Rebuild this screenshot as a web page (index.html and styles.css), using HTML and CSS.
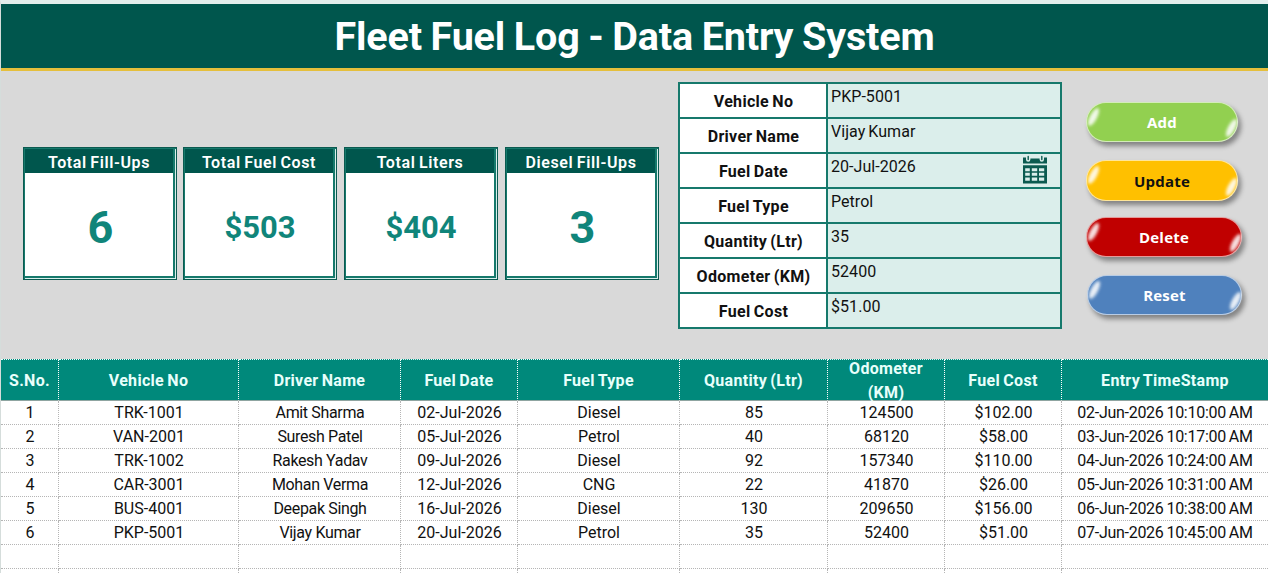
FILE: index.html
```
<!DOCTYPE html>
<html lang="en">
<head>
  <meta charset="UTF-8" />
  <meta name="viewport" content="width=device-width, initial-scale=1.0"/>
  <title>Fleet Fuel Log</title>
  <link rel="stylesheet" href="styles.css">
</head>
<body>
  <!-- Header -->
  <header>
    <h1>Fleet Fuel Log - Data Entry System</h1>
  </header>

  <!-- Summary cards, entry form and buttons -->
  <main class="panel">
    <section class="cards">
      <div class="card">
        <h2>Total Fill-Ups</h2>
        <div class="card-value big">6</div>
      </div>
      <div class="card">
        <h2>Total Fuel Cost</h2>
        <div class="card-value">$503</div>
      </div>
      <div class="card">
        <h2>Total Liters</h2>
        <div class="card-value">$404</div>
      </div>
      <div class="card">
        <h2>Diesel Fill-Ups</h2>
        <div class="card-value big">3</div>
      </div>
    </section>

    <section class="form">
      <div class="label">Vehicle No</div>
      <div class="field">PKP-5001</div>
      <div class="label">Driver Name</div>
      <div class="field">Vijay Kumar</div>
      <div class="label">Fuel Date</div>
      <div class="field">
        20-Jul-2026
        <svg class="calendar" width="24" height="29" viewBox="0 0 24 29">
          <path fill="#0b5a50" d="M0 2.5h3v2a2.2 2.2 0 0 0 4.4 0v-1h9.2v1a2.2 2.2 0 0 0 4.4 0v-2h3V8.6H0z"/>
          <path fill="none" stroke="#0b5a50" stroke-width="1.4" stroke-linecap="round" d="M5.2 1.4v3.2M18.8 1.4v3.2"/>
          <path fill="#0b5a50" fill-rule="evenodd" d="M0 10.3h24V28.5H0zM2.2 13.2v3h4.6v-3zM8.8 13.2v3h5.4v-3zM16 13.2v3h5.2v-3zM2.2 17.8v3h4.6v-3zM8.8 17.8v3h5.4v-3zM16 17.8v3h5.2v-3zM2.2 22.4v3.4h4.6v-3.4zM8.8 22.4v3.4h5.4v-3.4zM16 22.4v3.4h5.2v-3.4z"/>
        </svg>
      </div>
      <div class="label">Fuel Type</div>
      <div class="field">Petrol</div>
      <div class="label">Quantity (Ltr)</div>
      <div class="field">35</div>
      <div class="label">Odometer (KM)</div>
      <div class="field">52400</div>
      <div class="label">Fuel Cost</div>
      <div class="field">$51.00</div>
    </section>

    <section class="buttons">
      <button class="btn add">Add</button>
      <button class="btn update">Update</button>
      <button class="btn delete">Delete</button>
      <button class="btn reset">Reset</button>
    </section>
  </main>

  <!-- Log entries -->
  <table class="log">
    <colgroup>
      <col class="c-no"><col class="c-vehicle"><col class="c-driver"><col class="c-date"><col class="c-type">
      <col class="c-qty"><col class="c-odo"><col class="c-cost"><col class="c-stamp">
    </colgroup>
    <thead>
      <tr>
        <th>S.No.</th><th>Vehicle No</th><th>Driver Name</th><th>Fuel Date</th><th>Fuel Type</th>
        <th>Quantity (Ltr)</th><th><div class="two-line">Odometer<br>(KM)</div></th><th>Fuel Cost</th><th>Entry TimeStamp</th>
      </tr>
    </thead>
    <tbody>
      <tr><td>1</td><td>TRK-1001</td><td>Amit Sharma</td><td>02-Jul-2026</td><td>Diesel</td><td>85</td><td>124500</td><td>$102.00</td><td>02-Jun-2026 10:10:00 AM</td></tr>
      <tr><td>2</td><td>VAN-2001</td><td>Suresh Patel</td><td>05-Jul-2026</td><td>Petrol</td><td>40</td><td>68120</td><td>$58.00</td><td>03-Jun-2026 10:17:00 AM</td></tr>
      <tr><td>3</td><td>TRK-1002</td><td>Rakesh Yadav</td><td>09-Jul-2026</td><td>Diesel</td><td>92</td><td>157340</td><td>$110.00</td><td>04-Jun-2026 10:24:00 AM</td></tr>
      <tr><td>4</td><td>CAR-3001</td><td>Mohan Verma</td><td>12-Jul-2026</td><td>CNG</td><td>22</td><td>41870</td><td>$26.00</td><td>05-Jun-2026 10:31:00 AM</td></tr>
      <tr><td>5</td><td>BUS-4001</td><td>Deepak Singh</td><td>16-Jul-2026</td><td>Diesel</td><td>130</td><td>209650</td><td>$156.00</td><td>06-Jun-2026 10:38:00 AM</td></tr>
      <tr><td>6</td><td>PKP-5001</td><td>Vijay Kumar</td><td>20-Jul-2026</td><td>Petrol</td><td>35</td><td>52400</td><td>$51.00</td><td>07-Jun-2026 10:45:00 AM</td></tr>
      <tr><td></td><td></td><td></td><td></td><td></td><td></td><td></td><td></td><td></td></tr>
      <tr><td></td><td></td><td></td><td></td><td></td><td></td><td></td><td></td><td></td></tr>
    </tbody>
  </table>
</body>
</html>
```
FILE: styles.css
```
* {
  margin: 0;
  padding: 0;
  box-sizing: border-box;
}

body {
  height: 573px;
  overflow: hidden;
  font-family: Roboto, 'Liberation Sans', sans-serif;
  font-size: 16px;
  color: #111;
  background-color: #fff;
  border-top: 4px solid #e2eeec;
  border-left: 1px solid #d5dddb;
}

/* Header */
header {
  height: 67px;
  background-color: #00564d;
  border-bottom: 3px solid #e5bf3c;
  text-align: center;
}

h1 {
  font-size: 39.5px;
  line-height: 65px;
  font-weight: 700;
  color: #fff;
  letter-spacing: -0.15px;
  word-spacing: -1px;
}

/* Top panel */
.panel {
  display: flex;
  align-items: flex-start;
  height: 288px;
  background-color: #d9d9d9;
}

.cards {
  display: grid;
  grid-template-columns: 160px 161px 161px 154px;
  width: 636px;
  margin: 76px 19px 0 22px;
}

.card {
  width: 154px;
  height: 133px;
  padding: 1px 2px 2px 1px;
  background-color: #fff;
  border: 1px solid #0b5a50;
  box-shadow: inset 1px 1px 0 #16796c, inset -1px -1px 0 #d9efec, inset -3px -3px 0 #16796c;
}

.card h2 {
  height: 24px;
  margin-right: 1px;
  line-height: 27px;
  font-size: 16px;
  font-weight: 600;
  letter-spacing: 0.6px;
  word-spacing: -1px;
  text-align: center;
  color: #fff;
  background-color: #00564d;
}

.card-value {
  height: 104px;
  padding: 4px 0 0 1px;
  line-height: 102px;
  font-size: 31px;
  font-weight: 700;
  text-align: center;
  color: #10857a;
}

.card-value.big {
  padding-left: 2px;
  font-size: 45px;
}

/* Entry form */
.form {
  display: grid;
  grid-template-columns: 146px 232px;
  grid-auto-rows: 33px;
  gap: 2px;
  margin-top: 11px;
  padding: 2px;
  background-color: #16796c;
}

.label {
  padding-left: 1px;
  line-height: 36px;
  font-weight: 700;
  text-align: center;
  background-color: #fff;
  letter-spacing: 0.3px;
  word-spacing: -1px;
}

.field {
  position: relative;
  padding-left: 3px;
  line-height: 26px;
  letter-spacing: 0.05px;
  word-spacing: -1px;
  background-color: #dbeeeb;
}

.calendar {
  position: absolute;
  top: 1px;
  right: 13px;
}

/* Buttons */
.buttons {
  display: flex;
  flex-direction: column;
  margin: 31px 0 0 24px;
}

.btn {
  position: relative;
  width: 152px;
  height: 40px;
  margin-bottom: 18px;
  border: 1px solid #ffffff99;
  border-radius: 20px;
  font-family: 'Open Sans', sans-serif;
  font-size: 15px;
  font-weight: 700;
  letter-spacing: 0.2px;
  color: #fff;
  box-shadow: 3px 4px 5px #00000066;
}

/* glossy reflections at both ends */
.btn::before,
.btn::after {
  content: '';
  position: absolute;
  width: 7px;
  height: 20px;
  border-radius: 50%;
  background-color: #ffffffdd;
  filter: blur(1.5px);
  transform: rotate(28deg);
}

.btn::before {
  top: 4px;
  left: 3px;
}

.btn::after {
  right: 2px;
  bottom: 3px;
}

.add { background-color: #92d050; }

.update {
  height: 41px;
  margin-bottom: 16px;
  background-color: #ffc000;
  color: #111;
}

.delete {
  width: 156px;
  background-color: #c00000;
}

.reset {
  width: 155px;
  margin-left: 1px;
  background-color: #4f81bd;
}

/* Log table */
.log {
  width: 1267px;
  table-layout: fixed;
  border-collapse: separate;
  border-spacing: 0;
}

.c-no { width: 58px; }
.c-vehicle { width: 180px; }
.c-driver { width: 162px; }
.c-date { width: 117px; }
.c-type { width: 162px; }
.c-qty { width: 148px; }
.c-odo { width: 117px; }
.c-cost { width: 117px; }
.c-stamp { width: 206px; }

.log th {
  height: 42px;
  font-weight: 700;
  color: #e8fffb;
  background-color: #00897b;
  border-top: 1px dotted #e8fffb;
  border-right: 1px dotted #fff;
  border-bottom: 1px solid #8fa5a1;
  letter-spacing: 0.3px;
  word-spacing: -1px;
}

.two-line {
  height: 40px;
  line-height: 24px;
  margin-top: -6px;
}

.log td {
  height: 24px;
  padding-left: 1px;
  line-height: 23px;
  text-align: center;
  white-space: nowrap;
  border-right: 1px dotted #b5b5b5;
  border-bottom: 1px dotted #b5b5b5;
}

/* names */
.log td:nth-child(3) {
  letter-spacing: -0.35px;
}

.log td:last-child {
  padding-left: 0;
  letter-spacing: -0.28px;
  word-spacing: -0.8px;
}

.log th:last-child,
.log td:last-child {
  border-right: none;
}
```
